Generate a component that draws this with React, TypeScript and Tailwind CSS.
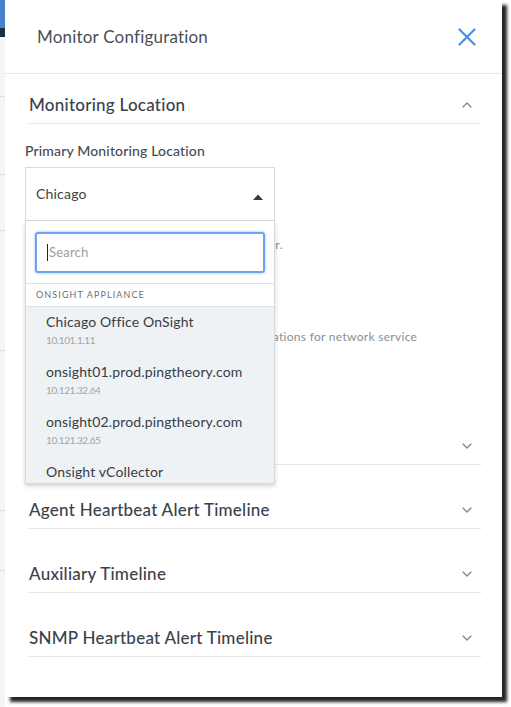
import React from "react";

const font = { fontFamily: "Lato, 'Liberation Sans', sans-serif" };

function ChevronDown() {
  return (
    <svg width="10" height="6" viewBox="0 0 10 6" fill="none">
      <path d="M1 1l4 4 4-4" stroke="#7b8a99" strokeWidth="1.4" strokeLinecap="round" strokeLinejoin="round" />
    </svg>
  );
}
function ChevronUp() {
  return (
    <svg width="10" height="6" viewBox="0 0 10 6" fill="none">
      <path d="M1 5l4-4 4 4" stroke="#7b8a99" strokeWidth="1.4" strokeLinecap="round" strokeLinejoin="round" />
    </svg>
  );
}

function Section({ title, up, className = "" }: { title: string; up?: boolean; className?: string }) {
  return (
    <div className={"flex items-center justify-between h-[64px] pt-[34px] pb-[8px] border-b border-[#e3e5e8] " + className}>
      <span className="text-[17px] leading-[22px] font-medium tracking-[0.25px] text-[#39424d]">{title}</span>
      <span className="mr-[9px]">{up ? <ChevronUp /> : <ChevronDown />}</span>
    </div>
  );
}

const items = [
  { name: "Chicago Office OnSight", ip: "10.101.1.11" },
  { name: "onsight01.prod.pingtheory.com", ip: "10.121.32.64" },
  { name: "onsight02.prod.pingtheory.com", ip: "10.121.32.65" },
  { name: "Onsight vCollector", ip: "10.121.32.70" },
];

export default function App() {
  return (
    <div className="w-[511px] h-[707px] flex overflow-hidden bg-white" style={font}>
      <div className="w-[5px] flex flex-col shrink-0 bg-[#f4f5f7]">
        <div className="h-[28px] bg-[#4a80c9]" />
        <div className="h-[9px] bg-[#1e2c45]" />
        <div className="h-[60px] border-b border-[#dcdcdc]" />
        <div className="h-[78px] border-b border-[#dcdcdc]" />
        <div className="h-[56px] border-b border-[#dcdcdc]" />
        <div className="h-[120px] border-b border-[#dcdcdc]" />
        <div className="h-[160px] border-b border-[#dcdcdc]" />
        <div className="h-[60px] border-b border-[#dcdcdc]" />
      </div>
      <div className="w-[497px] h-[697px] shrink-0 bg-white flex flex-col shadow-[5px_5px_3px_rgba(0,0,0,0.85)]">
        <div className="h-[74px] shrink-0 border-b border-[#e6e6e6] flex items-center justify-between pl-[32px] pr-[26px]">
          <span className="text-[17px] text-[#4a4f56] tracking-[0.2px] pt-[1px]">Monitor Configuration</span>
          <svg width="18" height="18" viewBox="0 0 18 18" fill="none" className="mt-[1px]">
            <path d="M1.5 1.5l15 15M16.5 1.5l-15 15" stroke="#4a8ee2" strokeWidth="2.2" strokeLinecap="round" />
          </svg>
        </div>
        <div className="pl-[20px] pr-[21px]">
          <div className="pl-[4px]">
            <div className="flex items-center justify-between h-[50px] pt-[20px] pb-[8px] border-b border-[#e3e5e8]">
              <span className="text-[17px] leading-[22px] font-medium tracking-[0.25px] text-[#39424d]">Monitoring Location</span>
              <span className="mr-[9px]"><ChevronUp /></span>
            </div>
          </div>
          <div className="mt-[17px] text-[14px] leading-[20px] font-medium tracking-[0.15px] text-[#464b52]">Primary Monitoring Location</div>
          <div className="relative mt-[6px] w-[250px]">
            <div className="h-[54px] border border-[#d7dadd] bg-white flex items-center justify-between pl-[10px] pr-[11px]">
              <span className="text-[14px] tracking-[0.2px] text-[#3e434a] -mt-[2px]">Chicago</span>
              <svg width="10" height="6" viewBox="0 0 10 6" className="mt-[5px]">
                <path d="M0 6L5 0.5L10 6Z" fill="#333a42" />
              </svg>
            </div>
            <div className="absolute left-0 top-[54px] w-[250px] h-[263px] bg-white border border-t-0 border-[#d7dadd] shadow-[0_2px_4px_rgba(0,0,0,0.18)] flex flex-col z-10 overflow-hidden">
              <div className="px-[9px] pt-[11px] pb-[10px] border-b border-[#e0e2e5]">
                <div className="h-[41px] rounded-[3px] border-2 border-[#6aa3ee] shadow-[0_0_3px_rgba(80,140,230,0.6)] flex items-center pl-[10px]">
                  <span className="w-px h-[17px] bg-[#222] mr-[1px]" />
                  <span className="text-[13px] tracking-[0.2px] text-[#9a9ea4]">Search</span>
                </div>
              </div>
              <div className="h-[23px] shrink-0 border-b border-[#e0e2e5] flex items-center pl-[10px] text-[9px] tracking-[1.1px] text-[#6b7078]">
                ONSIGHT APPLIANCE
              </div>
              <div className="flex-1 bg-[#eff2f5] pl-[20px]">
                {items.map((it) => (
                  <div key={it.name} className="h-[50px] pt-[6px]">
                    <div className="text-[14px] leading-[18px] tracking-[0.15px] text-[#383d44]">{it.name}</div>
                    <div className="text-[10px] leading-[14px] mt-[2px] text-[#a0a4a9] tracking-[-0.4px]">{it.ip}</div>
                  </div>
                ))}
              </div>
            </div>
          </div>
          <div className="mt-[17px] text-[12px] leading-[14px] tracking-[0.45px] text-[#8a8e93] whitespace-nowrap">Select the location that will run your monitor.</div>
          <div className="mt-[78px] text-[12px] leading-[14px] tracking-[0.3px] text-[#8a8e93] whitespace-nowrap">Select one or more secondary monitoring locations for network service</div>
          <div className="pl-[4px]">
            <Section title="Alert Timeline" className="mt-[57px]" />
            <Section title="Agent Heartbeat Alert Timeline" />
            <Section title="Auxiliary Timeline" />
            <Section title="SNMP Heartbeat Alert Timeline" />
          </div>
        </div>
      </div>
    </div>
  );
}
